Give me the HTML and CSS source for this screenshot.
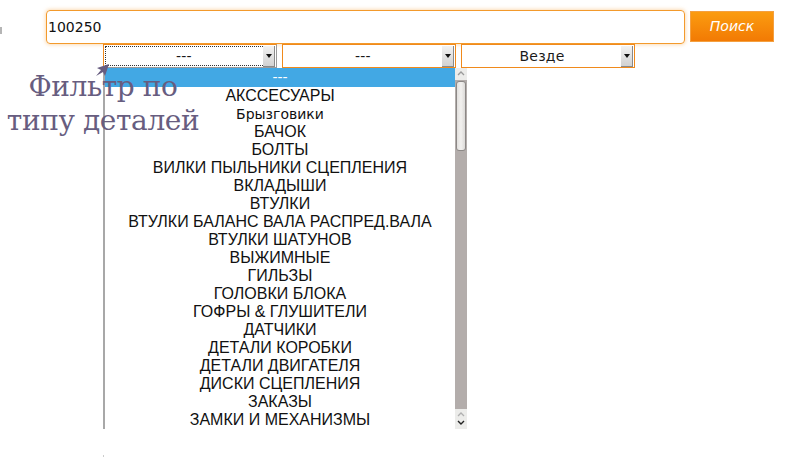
FILE: index.html
```html
<!DOCTYPE html>
<html lang="ru">
<head>
<meta charset="utf-8">
<link rel="stylesheet" href="styles.css">
</head>
<body>
<div class="page">
  <span class="edge-mark"></span>
  <div class="search-row">
    <div class="search-input">100250</div>
    <div class="search-btn">Поиск</div>
  </div>
  <div class="select-row">
    <div class="select focused"><span class="sel-text">---</span><span class="sel-arrow"></span></div>
    <div class="select"><span class="sel-text">---</span><span class="sel-arrow"></span></div>
    <div class="select"><span class="sel-text">Везде</span><span class="sel-arrow"></span></div>
  </div>
  <div class="list-wrap">
    <div class="list">
      <div class="items">
        <div class="item selected">---</div>
        <div class="item">АКССЕСУАРЫ</div>
        <div class="item small">Брызговики</div>
        <div class="item">БАЧОК</div>
        <div class="item">БОЛТЫ</div>
        <div class="item">ВИЛКИ ПЫЛЬНИКИ СЦЕПЛЕНИЯ</div>
        <div class="item">ВКЛАДЫШИ</div>
        <div class="item">ВТУЛКИ</div>
        <div class="item">ВТУЛКИ БАЛАНС ВАЛА РАСПРЕД.ВАЛА</div>
        <div class="item">ВТУЛКИ ШАТУНОВ</div>
        <div class="item">ВЫЖИМНЫЕ</div>
        <div class="item">ГИЛЬЗЫ</div>
        <div class="item">ГОЛОВКИ БЛОКА</div>
        <div class="item">ГОФРЫ &amp; ГЛУШИТЕЛИ</div>
        <div class="item">ДАТЧИКИ</div>
        <div class="item">ДЕТАЛИ КОРОБКИ</div>
        <div class="item">ДЕТАЛИ ДВИГАТЕЛЯ</div>
        <div class="item">ДИСКИ СЦЕПЛЕНИЯ</div>
        <div class="item">ЗАКАЗЫ</div>
        <div class="item">ЗАМКИ И МЕХАНИЗМЫ</div>
      </div>
      <div class="scrollbar">
        <div class="sb-btn top">
          <svg width="12" height="12" viewBox="0 0 12 12"><path d="M3 7 L6 4 L9 7" fill="none" stroke="#9a9a9a" stroke-width="1.3"/></svg>
        </div>
        <div class="sb-thumb"></div>
        <div class="sb-track"></div>
        <div class="sb-btn bottom">
          <svg width="12" height="20" viewBox="0 0 12 20"><path d="M3 7 L6 4 L9 7" fill="none" stroke="#b0b0b0" stroke-width="1.3"/><path d="M3 12 L6 15 L9 12" fill="none" stroke="#222" stroke-width="1.4"/></svg>
        </div>
      </div>
    </div>
    <div class="caption">
      <svg class="pointer" width="15" height="13" viewBox="0 0 15 13"><path d="M14 0 L2 4 L6 6 L1 12 L8 8 L10 12 Z" fill="#675d80"/></svg>
      <div class="caption-text">Фильтр по<br>типу деталей</div>
    </div>
  </div>
  <span class="foot-mark"></span>
</div>
</body>
</html>
```

FILE: styles.css
```css
html, body {
  margin: 0;
  padding: 0;
  background: #ffffff;
}

.page {
  position: relative;
  width: 800px;
  height: 458px;
  overflow: hidden;
  font-family: "DejaVu Sans", sans-serif;
}

.edge-mark {
  position: absolute;
  left: 0;
  top: 27px;
  width: 2px;
  height: 7px;
  background: #b5b5b5;
}

.search-row {
  display: flex;
  align-items: flex-start;
  gap: 5px;
  padding: 10px 0 0 46px;
}

.search-input {
  box-sizing: border-box;
  width: 639px;
  height: 34px;
  border: 1px solid #f39a2c;
  border-radius: 4px;
  box-shadow: 0 0 4px rgba(245, 160, 60, 0.55);
  padding: 0 0 0 1px;
  font-size: 14px;
  line-height: 32px;
  color: #111;
}

.search-btn {
  box-sizing: border-box;
  width: 84px;
  height: 31px;
  margin-top: 1px;
  background: linear-gradient(#fb9c10, #f27a04);
  border: 1px solid #f4a040;
  color: #fff;
  font-style: italic;
  font-size: 14px;
  line-height: 29px;
  text-align: center;
}

.select-row {
  display: flex;
  gap: 5px;
  margin-left: 103px;
  height: 24px;
}

.select {
  box-sizing: border-box;
  width: 174px;
  height: 24px;
  border: 1px solid #f08a1c;
  display: flex;
  align-items: center;
  background: #fff;
  padding: 1px;
}

.select.focused {
  border: 1px solid #f08a1c;
  border-right-color: #9a9a9a;
  border-bottom-color: #9a9a9a;
  outline: 1px dotted #333;
  outline-offset: -3px;
}

.sel-text {
  flex: 1;
  text-align: center;
  font-size: 14px;
  font-weight: 500;
  color: #1a1a1a;
  letter-spacing: 0.2px;
}

.sel-arrow {
  position: relative;
  width: 11px;
  height: 20px;
  background: linear-gradient(#f2f2f2, #d2d2d2);
  border-right: 1px solid #8a8a8a;
  border-bottom: 1px solid #8a8a8a;
}

.sel-arrow::after {
  content: "";
  position: absolute;
  left: 3px;
  top: 8px;
  border-left: 3px solid transparent;
  border-right: 3px solid transparent;
  border-top: 4px solid #111;
}

.list-wrap {
  position: relative;
}

.list {
  display: flex;
  margin-left: 103px;
  width: 364px;
  height: 361px;
  border-left: 2px solid #a8a8a8;
  box-sizing: border-box;
  background: #fff;
}

.items {
  flex: 1;
  display: flex;
  flex-direction: column;
  font-family: "Liberation Sans", Arial, sans-serif;
  font-size: 16px;
  color: #111;
}

.item {
  height: 18px;
  line-height: 18px;
  text-align: center;
  white-space: nowrap;
}

.item.selected {
  height: 19px;
  line-height: 19px;
  background: #42a8e4;
  color: #fff;
  font-family: "DejaVu Sans", sans-serif;
  font-size: 14px;
}

.item.small {
  font-family: "DejaVu Sans", sans-serif;
  font-size: 14px;
}

.scrollbar {
  width: 12px;
  display: flex;
  flex-direction: column;
  background: #b3adab;
}

.sb-btn {
  background: #ececea;
  display: flex;
  justify-content: center;
}

.sb-btn.top {
  height: 12px;
}

.sb-btn.bottom {
  height: 20px;
  margin-top: auto;
}

.sb-thumb {
  box-sizing: border-box;
  height: 70px;
  margin: 1px 1px 0;
  background: linear-gradient(90deg, #e2e0de, #f2f1ef, #dcdad8);
  border: 1px solid #8c8886;
  border-radius: 3px;
}

.sb-track {
  flex: 1;
}

.caption {
  position: absolute;
  left: 0;
  top: -8px;
  width: 206px;
}

.pointer {
  position: absolute;
  left: 95px;
  top: 4px;
}

.caption-text {
  padding-top: 10px;
  text-align: center;
  font-family: "DejaVu Serif", serif;
  font-size: 28px;
  line-height: 34px;
  color: #675d80;
  font-weight: normal;
  letter-spacing: -0.4px;
}

.foot-mark {
  position: absolute;
  left: 103px;
  top: 455px;
  width: 1px;
  height: 2px;
  background: #ccc;
}
```
